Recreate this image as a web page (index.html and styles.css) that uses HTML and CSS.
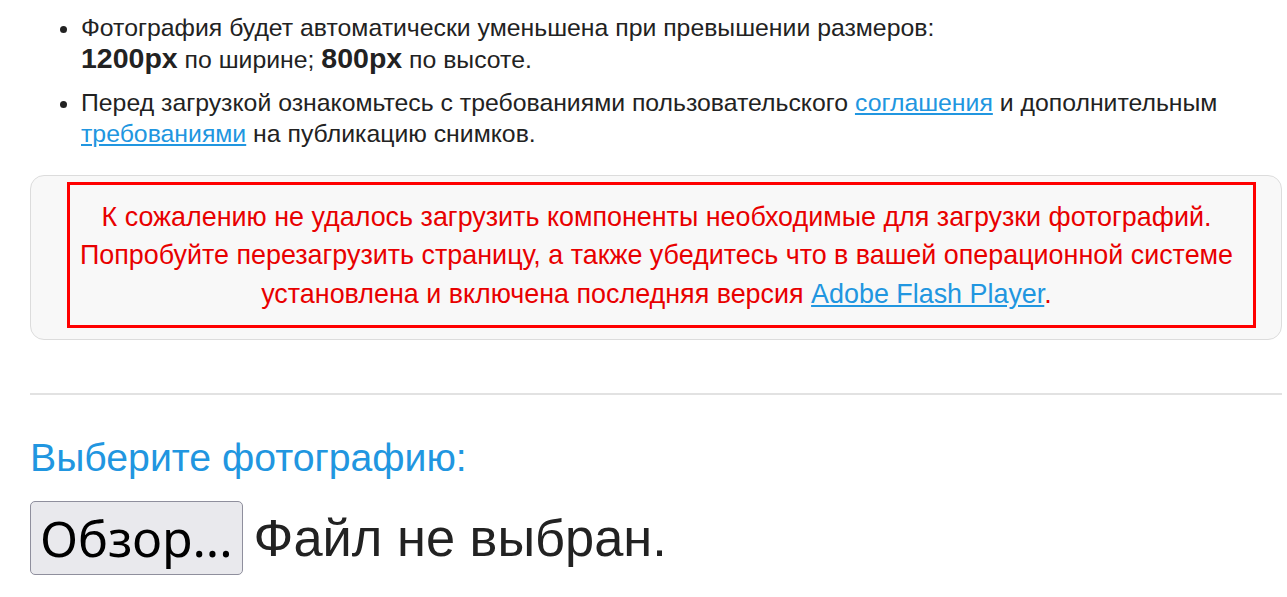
FILE: index.html
```html
<!DOCTYPE html>
<html lang="ru">
<head>
<meta charset="utf-8">
<title>Загрузка фотографии</title>
<link rel="stylesheet" href="styles.css">
</head>
<body>
<div class="page">
  <ul class="rules">
    <li>Фотография будет автоматически уменьшена при превышении размеров:<br><b>1200px</b> по ширине; <b>800px</b> по высоте.</li>
    <li>Перед загрузкой ознакомьтесь с требованиями пользовательского <a href="#">соглашения</a> и дополнительным <a href="#">требованиями</a> на публикацию снимков.</li>
  </ul>
  <div class="notice-wrap">
    <div class="notice">К сожалению не удалось загрузить компоненты необходимые для загрузки фотографий.<br>Попробуйте перезагрузить страницу, а также убедитесь что в вашей операционной системе<br>установлена и включена последняя версия <a href="#">Adobe Flash Player</a>.</div>
  </div>
  <hr class="divider">
  <h3 class="pick-title">Выберите фотографию:</h3>
  <div class="file-row">
    <button class="file-btn" type="button">Обзор...</button>
    <span class="file-label">Файл не выбран.</span>
  </div>
</div>
</body>
</html>
```
FILE: styles.css
```css
html, body {
  margin: 0;
  padding: 0;
  background: #fff;
}
body {
  font-family: "Liberation Sans", Arial, sans-serif;
  font-size: 24.8px;
  line-height: 30.5px;
  color: #222;
}
.page {
  width: 1252px;
  padding-left: 30px;
}
a {
  color: #2196e0;
  text-decoration: underline;
}
.rules {
  margin: 13px 0 0;
  padding-left: 51px;
}
.rules li + li {
  margin-top: 13px;
}
.rules b {
  font-size: 28.5px;
  line-height: 1;
}
.notice-wrap {
  margin-top: 26px;
  border: 1px solid #dcdcdc;
  border-radius: 14px;
  background: #f8f8f8;
  padding: 6px 25px 11px 36px;
}
.notice {
  border: 3px solid #ff0000;
  padding: 13px 16px 12px 6px;
  text-align: center;
  color: #e80000;
  font-size: 26.9px;
  line-height: 38.4px;
  white-space: nowrap;
}
.divider {
  margin: 53px 0 0;
  border: 0;
  border-top: 2px solid #e2e2e2;
  height: 0;
}
.pick-title {
  margin: 42px 0 0;
  font-size: 39.2px;
  font-weight: normal;
  line-height: 42px;
  color: #2196e0;
}
.file-row {
  margin-top: 22px;
  display: flex;
  align-items: center;
  gap: 11px;
}
.file-btn {
  font-family: "Noto Sans", "Open Sans", sans-serif;
  font-size: 50px;
  line-height: 64px;
  color: #000;
  background: #e9e9ed;
  border: 1px solid #8f8f9d;
  border-radius: 5px;
  padding: 4px 9px;
  margin: 0;
}
.file-label {
  font-size: 52.4px;
  line-height: 1;
  color: #222;
}
```
